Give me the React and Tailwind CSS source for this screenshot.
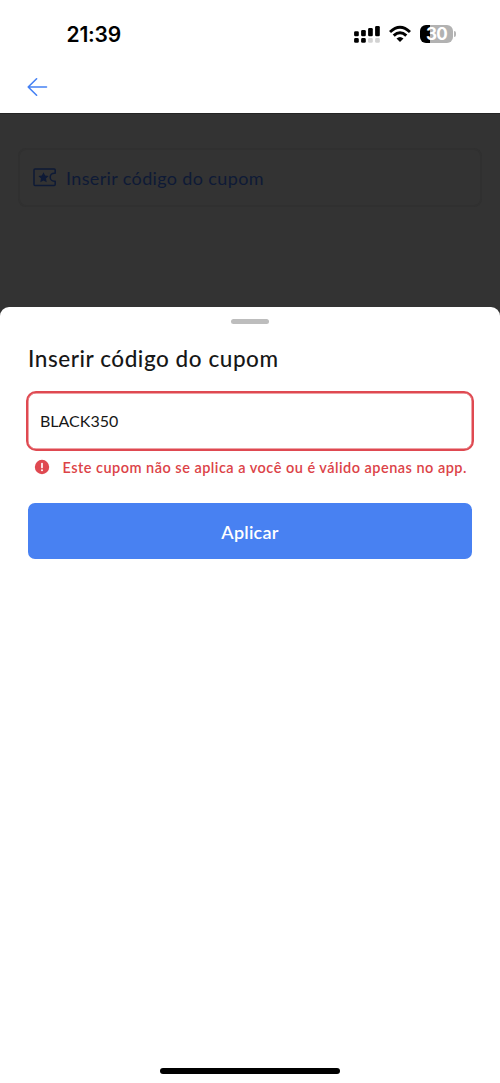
function StatusBar() {
  return (
    <div className="flex h-[68px] items-center pl-[66.5px] pr-[47px]">
      <span className="mt-px font-['Inter',sans-serif] text-[21px] leading-6 font-semibold tracking-[-0.2px] text-black">21:39</span>
      <svg className="ml-auto" width="27" height="20" viewBox="0 0 27 20" fill="#000">
        <rect x="0.1" y="7.2" width="4.7" height="5" rx="1.3" />
        <rect x="7.1" y="6" width="4.7" height="6.2" rx="1.3" />
        <rect x="14.1" y="4" width="4.7" height="8.2" rx="1.3" />
        <rect x="21.1" y="2" width="4.7" height="10.2" rx="1.3" />
        <rect x="0.1" y="14" width="4.7" height="4.8" rx="1.4" />
        <rect x="7.1" y="14" width="4.7" height="4.8" rx="1.4" />
        <rect x="14.1" y="14" width="4.7" height="4.8" rx="1.4" fill="#d2d2d2" />
        <rect x="21.1" y="14" width="4.7" height="4.8" rx="1.4" fill="#d2d2d2" />
      </svg>
      <svg className="ml-2" width="22" height="18" viewBox="0 0 22 18" fill="none" stroke="#000" strokeWidth="3">
        <path d="M1 7 Q11 -2.5 21 7" />
        <path d="M4.7 10.7 Q11 4.8 17.3 10.7" />
        <path d="M11 17 L7.5 13.5 Q11 10.4 14.5 13.5Z" fill="#000" stroke="none" />
      </svg>
      <div className="ml-[9px] flex h-[18px] w-[33px] shrink-0 items-center justify-center overflow-hidden rounded-[6px] bg-linear-to-r from-black from-[31%] to-[#b2b2b2] to-[31%]">
        <span className="font-['Inter',sans-serif] text-[17px] leading-[18px] font-bold tracking-[-0.8px] text-white">30</span>
      </div>
      <div className="-mr-[3px] ml-px h-[6px] w-[2px] rounded-r-full bg-[#b5b5b5]" />
    </div>
  );
}

function CouponIcon() {
  return (
    <svg className="ml-px" width="24" height="19" viewBox="0 0 24 19" fill="none" stroke="#0e1a36" strokeWidth="1.5" strokeLinejoin="round">
      <path d="M2 1H21.2Q22.2 1 22.2 2V5.2H21.2A4 4 0 0 0 21.2 13.2H22.2V16.5Q22.2 17.5 21.2 17.5H2Q1 17.5 1 16.5V2Q1 1 2 1Z" />
      <path d="M10.5 4.3L12.1 7.6L15.6 8.1L13 10.6L13.7 14.2L10.5 12.5L7.3 14.2L8 10.6L5.4 8.1L8.9 7.6Z" fill="#0e1a36" stroke="none" />
    </svg>
  );
}

export default function App() {
  return (
    <div className="flex h-[1083px] w-[500px] flex-col overflow-hidden bg-white font-['Lato',sans-serif] whitespace-nowrap">
      <StatusBar />
      <header className="flex h-[45px] shrink-0 items-start pt-[9px] pl-[27px]">
        <svg width="21" height="20" viewBox="0 0 21 20" fill="none" stroke="#4581f4" strokeWidth="1.6" strokeLinecap="round" strokeLinejoin="round">
          <path d="M19.5 10H1.2M9.6 1.8L1.2 10L9.6 18.2" />
        </svg>
      </header>
      <div className="flex min-h-0 flex-1 flex-col border-t border-[#242424] bg-[#333333]">
        <div className="mx-[18px] mt-[34px] flex h-[59px] shrink-0 items-center rounded-lg border-2 border-[#303030] pl-[12px]">
          <CouponIcon />
          <span className="ml-[9px] text-[18px] leading-6 tracking-[0.36px] text-[#0e1a36]">Inserir código do cupom</span>
        </div>
        <main className="mt-[100px] flex flex-1 flex-col rounded-t-[9px] bg-white px-[28px]">
          <div className="mt-[12px] h-[5px] w-[38px] shrink-0 self-center rounded-full bg-[#bdbdbd]" />
          <h1 className="mt-[21px] text-[22.5px] leading-7 font-medium tracking-[0.56px] text-[#171717]">Inserir código do cupom</h1>
          <input aria-label="Código do cupom" defaultValue="BLACK350" className="-mx-[2px] mt-[18px] h-[60px] rounded-[10px] border-2 border-[#df4951] px-[12px] pb-[2px] text-[16px] text-[#171717] inset-shadow-[0_0_0_0.5px_#df4951] outline-none" />
          <div className="mt-[4px] flex h-6 items-center pl-[6px] text-[#dc4348]">
            <svg width="16" height="16" viewBox="0 0 16 16">
              <circle cx="8" cy="8" r="7.2" fill="#df4951" />
              <path d="M8 4.5V8.5" stroke="#fff" strokeWidth="1.7" strokeLinecap="round" />
              <circle cx="8" cy="11.2" r="1" fill="#fff" />
            </svg>
            <span className="ml-[12.5px] pt-[2px] text-[14.5px] leading-6 font-semibold tracking-[0.48px]">Este cupom não se aplica a você ou é válido apenas no app.</span>
          </div>
          <button className="mt-[24px] h-[56px] rounded-[7px] bg-[#4881f2] pt-[2px] text-[18px] font-semibold tracking-[0.25px] text-white">Aplicar</button>
          <div className="mt-auto mb-[9px] h-[6px] w-[180px] self-center rounded-full bg-black" />
        </main>
      </div>
    </div>
  );
}
